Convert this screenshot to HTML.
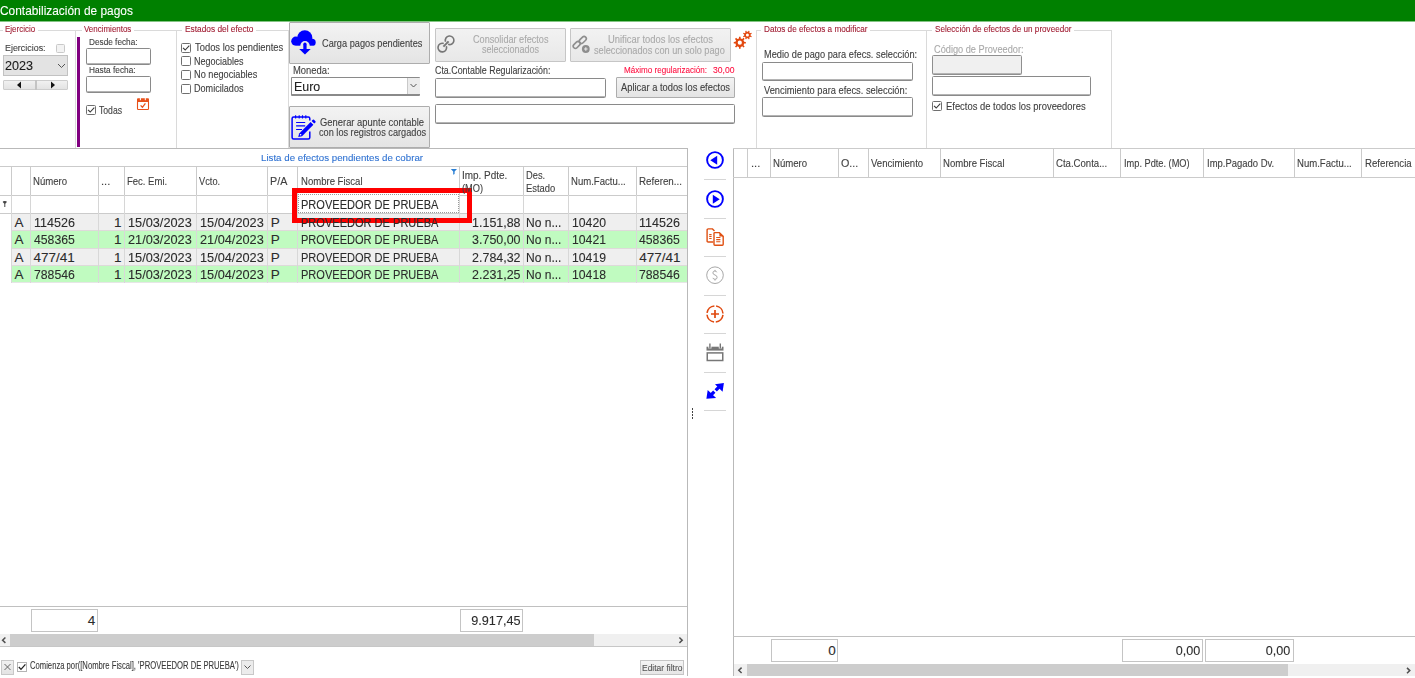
<!DOCTYPE html>
<html><head><meta charset="utf-8"><title>Contabilización de pagos</title>
<style>
html,body{margin:0;padding:0;background:#fff;width:1415px;height:678px;overflow:hidden}
body{position:relative;font-family:"Liberation Sans",sans-serif}
div,svg,span{position:absolute}
span{white-space:pre;-webkit-text-stroke:0.1px currentColor}
</style></head><body>
<div style="left:0px;top:0px;width:1415px;height:21px;background:#008000"></div>
<div style="left:0px;top:21px;width:1415px;height:1px;background:#84c484"></div>
<div style="left:-1px;top:30px;width:76px;height:1px;background:#dadada"></div>
<div style="left:75px;top:30px;width:1px;height:118px;background:#dadada"></div>
<div style="left:2.5px;top:24px;width:35.2px;height:10px;background:#fff"></div>
<div style="left:75px;top:30px;width:101px;height:1px;background:#dadada"></div>
<div style="left:75px;top:30px;width:1px;height:118px;background:#dadada"></div>
<div style="left:176px;top:30px;width:1px;height:118px;background:#dadada"></div>
<div style="left:81.6px;top:24px;width:52.4px;height:10px;background:#fff"></div>
<div style="left:176px;top:30px;width:112px;height:1px;background:#dadada"></div>
<div style="left:176px;top:30px;width:1px;height:118px;background:#dadada"></div>
<div style="left:288px;top:30px;width:1px;height:118px;background:#dadada"></div>
<div style="left:182px;top:24px;width:73.5px;height:10px;background:#fff"></div>
<div style="left:756px;top:30px;width:170px;height:1px;background:#dadada"></div>
<div style="left:756px;top:30px;width:1px;height:118px;background:#dadada"></div>
<div style="left:926px;top:30px;width:1px;height:118px;background:#dadada"></div>
<div style="left:761.4px;top:24px;width:108.6px;height:10px;background:#fff"></div>
<div style="left:926px;top:30px;width:185px;height:1px;background:#dadada"></div>
<div style="left:926px;top:30px;width:1px;height:118px;background:#dadada"></div>
<div style="left:1111px;top:30px;width:1px;height:118px;background:#dadada"></div>
<div style="left:932px;top:24px;width:141.5px;height:10px;background:#fff"></div>
<div style="left:56px;top:44px;width:9px;height:9px;box-sizing:border-box;border:1px solid #c9c9c9;border-radius:1.5px;background:#f3f3f3"></div>
<div style="left:3px;top:55px;width:65px;height:21px;box-sizing:border-box;background:#e3e3e3;border:1px solid #c2c2c2"></div>
<svg style="left:57px;top:63px" width="9" height="6" viewBox="0 0 9 6"><path d="M1 1 L4.5 4.5 L8 1" fill="none" stroke="#555" stroke-width="1"/></svg>
<div style="left:3px;top:80px;width:65px;height:10px;box-sizing:border-box;background:linear-gradient(#f1f1f1,#e3e3e3);border:1px solid #cdcdcd;border-radius:1px"></div>
<div style="left:35px;top:80px;width:1.5px;height:10px;background:#c4c4c4"></div>
<svg style="left:16px;top:81px" width="6" height="8" viewBox="0 0 6 8"><path d="M5 0.5 L1 4 L5 7.5 Z" fill="#111"/></svg>
<svg style="left:50px;top:81px" width="6" height="8" viewBox="0 0 6 8"><path d="M1 0.5 L5 4 L1 7.5 Z" fill="#111"/></svg>
<div style="left:77px;top:37px;width:3px;height:110px;background:#800080"></div>
<div style="left:86px;top:48px;width:65px;height:17px;box-sizing:border-box;background:#fff;border:1px solid #8a8a8a;border-radius:1.5px;box-shadow:inset 0 -1px 0 #b4b4b4"></div>
<div style="left:86px;top:76px;width:65px;height:17px;box-sizing:border-box;background:#fff;border:1px solid #8a8a8a;border-radius:1.5px;box-shadow:inset 0 -1px 0 #b4b4b4"></div>
<div style="left:86px;top:105px;width:10px;height:10px;box-sizing:border-box;border:1px solid #6f6f6f;border-radius:1.5px;background:#fff"></div>
<svg style="left:86px;top:105px" width="10" height="10" viewBox="0 0 10 10"><path d="M2 4.8 L4.2 7 L8.3 2.6" fill="none" stroke="#3a3a3a" stroke-width="1.1"/></svg>
<svg style="left:132px;top:94px" width="22" height="22" viewBox="0 0 22 22"><g fill="#e8501a"><path d="M5 5.2 Q5 4.2 6 4.2 L16 4.2 Q17 4.2 17 5.2 L17 8 L5 8 Z"/></g><rect x="5.5" y="7.5" width="11" height="8" fill="none" stroke="#e8501a" stroke-width="1.1" rx="0.8"/><path d="M8.4 3.4 V6.2 M13.3 3.4 V6.2" stroke="#fff" stroke-width="1"/><path d="M8.6 11.4 L10.4 13.3 L13.4 9.3" fill="none" stroke="#e8501a" stroke-width="1.3"/></svg>
<div style="left:181px;top:43px;width:10px;height:10px;box-sizing:border-box;border:1px solid #6f6f6f;border-radius:1.5px;background:#fff"></div>
<svg style="left:181px;top:43px" width="10" height="10" viewBox="0 0 10 10"><path d="M2 4.8 L4.2 7 L8.3 2.6" fill="none" stroke="#3a3a3a" stroke-width="1.1"/></svg>
<div style="left:181px;top:56px;width:10px;height:10px;box-sizing:border-box;border:1px solid #6f6f6f;border-radius:1.5px;background:#fff"></div>
<div style="left:181px;top:70px;width:10px;height:10px;box-sizing:border-box;border:1px solid #6f6f6f;border-radius:1.5px;background:#fff"></div>
<div style="left:181px;top:84px;width:10px;height:10px;box-sizing:border-box;border:1px solid #6f6f6f;border-radius:1.5px;background:#fff"></div>
<div style="left:289px;top:22px;width:141px;height:42px;box-sizing:border-box;background:linear-gradient(#f3f3f3,#e4e4e4);border:1px solid #adadad;border-radius:1px"></div>
<svg style="left:288px;top:26px" width="32" height="32" viewBox="0 0 32 32"><defs><mask id="m1"><rect width="32" height="19.7" fill="#fff"/><circle cx="17" cy="19.8" r="4.7" fill="#000"/></mask></defs><g fill="#0000ff" mask="url(#m1)"><circle cx="16.8" cy="11.9" r="7.6"/><circle cx="7.9" cy="15.2" r="4.7"/><circle cx="24.1" cy="16.4" r="3.6"/><rect x="7.9" y="13" width="16" height="7"/></g><path d="M15.3 23.2 V18.2 Q15.3 16.5 16.95 16.5 Q18.6 16.5 18.6 18.2 V23.2 Z" fill="#0000ff"/><path d="M11.2 22.9 L22.7 22.9 L16.95 28.6 Z" fill="#0000ff"/></svg>
<div style="left:291px;top:77px;width:129px;height:19px;box-sizing:border-box;background:#fff;border:1px solid #8a8a8a;border-bottom:2px solid #8a8a8a;border-radius:1px"></div>
<div style="left:407px;top:78px;width:12px;height:16px;background:#ececec;border-left:1px solid #c9c9c9"></div>
<svg style="left:409px;top:83px" width="9" height="6" viewBox="0 0 9 6"><path d="M1.5 1 L4.5 4 L7.5 1" fill="none" stroke="#555" stroke-width="1"/></svg>
<div style="left:289px;top:106px;width:141px;height:42px;box-sizing:border-box;background:linear-gradient(#f3f3f3,#e4e4e4);border:1px solid #adadad;border-radius:1px"></div>
<svg style="left:289px;top:112px" width="30" height="30" viewBox="0 0 30 30"><path d="M20.8 8.6 V6.6 Q20.8 5.1 19.3 5.1 H4.6 Q3.1 5.1 3.1 6.6 V25.5 Q3.1 27 4.6 27 H19.3 Q20.8 27 20.8 25.5 V19.6" fill="none" stroke="#0000ff" stroke-width="1.5"/><path d="M6.6 3.2 V6.4 M10.2 3.2 V6.4 M13.5 3.2 V6.4 M16.8 3.2 V6.4" stroke="#0000ff" stroke-width="1.1"/><path d="M7.1 10.5 H16.2 M7.1 13.9 H16.2 M7.1 17.5 H13" stroke="#0000ff" stroke-width="1.2"/><path d="M10.2 21.4 L21.6 10 L24.4 12.8 L13 24.2 L9.2 25 Z" fill="#0000ff"/><path d="M22.6 9 L23.8 7.8 Q24.4 7.2 25 7.8 L26.4 9.2 Q27 9.8 26.4 10.4 L25.2 11.6 Z" fill="#0000ff"/><circle cx="11.6" cy="22.7" r="0.8" fill="#fff"/></svg>
<div style="left:435px;top:28px;width:131px;height:34px;box-sizing:border-box;background:linear-gradient(#f2f2f2,#e8e8e8);border:1px solid #c6c6c6;border-radius:1px"></div>
<svg style="left:434px;top:32px" width="24" height="24" viewBox="0 0 24 24"><g fill="none" stroke="#767676" stroke-width="1.6"><path d="M11.56 9.77 A4.3 4.3 0 1 1 14.13 12.34"/><path d="M12.34 14.13 A4.3 4.3 0 1 1 9.77 11.56"/><path d="M9.4 14.6 L14.6 9.4" stroke-width="2"/></g></svg>
<div style="left:435px;top:78px;width:171px;height:20px;box-sizing:border-box;background:#fff;border:1px solid #8a8a8a;border-radius:1.5px;box-shadow:inset 0 -1px 0 #b4b4b4"></div>
<div style="left:570px;top:28px;width:161px;height:34px;box-sizing:border-box;background:linear-gradient(#f2f2f2,#e8e8e8);border:1px solid #c6c6c6;border-radius:1px"></div>
<svg style="left:569px;top:32px" width="24" height="24" viewBox="0 0 24 24"><g fill="none" stroke="#8e8e8e" stroke-width="1.6"><rect x="9.8" y="5.75" width="8" height="4.4" rx="2.2" transform="rotate(-45 13.8 7.95)"/><rect x="3.7" y="10.7" width="8" height="4.4" rx="2.2" transform="rotate(-45 7.7 12.9)"/></g><circle cx="16.8" cy="17" r="3.9" fill="#8e8e8e"/><path d="M15.0 17 H18.6 M16.8 15.2 V18.8" stroke="#e6e6e6" stroke-width="1.2"/></svg>
<svg style="left:730px;top:26px" width="26" height="26" viewBox="0 0 26 26"><path d="M8.12,12.63 L8.94,12.38 L8.99,10.65 L10.61,10.65 L10.66,12.38 L11.48,12.63 L12.24,13.04 L13.50,11.85 L14.65,13.00 L13.46,14.26 L13.87,15.02 L14.12,15.84 L15.85,15.89 L15.85,17.51 L14.12,17.56 L13.87,18.38 L13.46,19.14 L14.65,20.40 L13.50,21.55 L12.24,20.36 L11.48,20.77 L10.66,21.02 L10.61,22.75 L8.99,22.75 L8.94,21.02 L8.12,20.77 L7.36,20.36 L6.10,21.55 L4.95,20.40 L6.14,19.14 L5.73,18.38 L5.48,17.56 L3.75,17.51 L3.75,15.89 L5.48,15.84 L5.73,15.02 L6.14,14.26 L4.95,13.00 L6.10,11.85 L7.36,13.04 Z M11.9,16.7 A2.1 2.1 0 1 0 7.700000000000001,16.7 A2.1 2.1 0 1 0 11.9,16.7 Z" fill="#e2480f" fill-rule="evenodd"/><path d="M17.40,5.80 L18.02,5.86 L18.55,4.65 L19.66,5.11 L19.18,6.34 L19.66,6.74 L20.06,7.22 L21.29,6.74 L21.75,7.85 L20.54,8.38 L20.60,9.00 L20.54,9.62 L21.75,10.15 L21.29,11.26 L20.06,10.78 L19.66,11.26 L19.18,11.66 L19.66,12.89 L18.55,13.35 L18.02,12.14 L17.40,12.20 L16.78,12.14 L16.25,13.35 L15.14,12.89 L15.62,11.66 L15.14,11.26 L14.74,10.78 L13.51,11.26 L13.05,10.15 L14.26,9.62 L14.20,9.00 L14.26,8.38 L13.05,7.85 L13.51,6.74 L14.74,7.22 L15.14,6.74 L15.62,6.34 L15.14,5.11 L16.25,4.65 L16.78,5.86 Z M18.9,9.0 A1.5 1.5 0 1 0 15.899999999999999,9.0 A1.5 1.5 0 1 0 18.9,9.0 Z" fill="#e2480f" fill-rule="evenodd"/></svg>
<div style="left:616px;top:77px;width:119px;height:21px;box-sizing:border-box;background:linear-gradient(#f3f3f3,#e4e4e4);border:1px solid #adadad;border-radius:1px"></div>
<div style="left:435px;top:104px;width:300px;height:20px;box-sizing:border-box;background:#fff;border:1px solid #8a8a8a;border-radius:1.5px;box-shadow:inset 0 -1px 0 #b4b4b4"></div>
<div style="left:762px;top:62px;width:151px;height:19px;box-sizing:border-box;background:#fff;border:1px solid #8a8a8a;border-radius:1.5px;box-shadow:inset 0 -1px 0 #b4b4b4"></div>
<div style="left:762px;top:97px;width:151px;height:20px;box-sizing:border-box;background:#fff;border:1px solid #8a8a8a;border-radius:1.5px;box-shadow:inset 0 -1px 0 #b4b4b4"></div>
<div style="left:932px;top:55px;width:90px;height:20px;box-sizing:border-box;background:#f0f0f0;border:1px solid #8f8f8f;border-radius:1.5px;box-shadow:inset 0 -1px 0 #b4b4b4"></div>
<div style="left:932px;top:76px;width:159px;height:20px;box-sizing:border-box;background:#fff;border:1px solid #8a8a8a;border-radius:1.5px;box-shadow:inset 0 -1px 0 #b4b4b4"></div>
<div style="left:932px;top:101px;width:10px;height:10px;box-sizing:border-box;border:1px solid #6f6f6f;border-radius:1.5px;background:#fff"></div>
<svg style="left:932px;top:101px" width="10" height="10" viewBox="0 0 10 10"><path d="M2 4.8 L4.2 7 L8.3 2.6" fill="none" stroke="#3a3a3a" stroke-width="1.1"/></svg>
<div style="left:0px;top:148px;width:688px;height:1px;background:#b9b9b9"></div>
<div style="left:687px;top:148px;width:1px;height:528px;background:#b9b9b9"></div>
<div style="left:0px;top:166px;width:687px;height:1px;background:#cbcbcb"></div>
<div style="left:0px;top:195px;width:687px;height:1px;background:#cbcbcb"></div>
<div style="left:0px;top:213px;width:687px;height:1px;background:#cbcbcb"></div>
<div style="left:12px;top:214px;width:675px;height:16px;background:#efefef"></div>
<div style="left:12px;top:231px;width:675px;height:17px;background:#c0fbc0"></div>
<div style="left:12px;top:249px;width:675px;height:16px;background:#efefef"></div>
<div style="left:12px;top:266px;width:675px;height:16px;background:#c0fbc0"></div>
<div style="left:12px;top:230px;width:675px;height:1px;background:#dedada"></div>
<div style="left:12px;top:248px;width:675px;height:1px;background:#dedada"></div>
<div style="left:12px;top:265px;width:675px;height:1px;background:#dedada"></div>
<div style="left:12px;top:282px;width:675px;height:1px;background:#e6e6e6"></div>
<div style="left:11px;top:166px;width:1px;height:29px;background:#cbcbcb"></div>
<div style="left:11px;top:195px;width:1px;height:18px;background:#d6d6d6"></div>
<div style="left:11px;top:213px;width:1px;height:70px;background:#d8d8d8"></div>
<div style="left:30px;top:166px;width:1px;height:29px;background:#cbcbcb"></div>
<div style="left:30px;top:195px;width:1px;height:18px;background:#d6d6d6"></div>
<div style="left:30px;top:213px;width:1px;height:70px;background:#d8d8d8"></div>
<div style="left:98px;top:166px;width:1px;height:29px;background:#cbcbcb"></div>
<div style="left:98px;top:195px;width:1px;height:18px;background:#d6d6d6"></div>
<div style="left:98px;top:213px;width:1px;height:70px;background:#d8d8d8"></div>
<div style="left:124px;top:166px;width:1px;height:29px;background:#cbcbcb"></div>
<div style="left:124px;top:195px;width:1px;height:18px;background:#d6d6d6"></div>
<div style="left:124px;top:213px;width:1px;height:70px;background:#d8d8d8"></div>
<div style="left:196px;top:166px;width:1px;height:29px;background:#cbcbcb"></div>
<div style="left:196px;top:195px;width:1px;height:18px;background:#d6d6d6"></div>
<div style="left:196px;top:213px;width:1px;height:70px;background:#d8d8d8"></div>
<div style="left:267px;top:166px;width:1px;height:29px;background:#cbcbcb"></div>
<div style="left:267px;top:195px;width:1px;height:18px;background:#d6d6d6"></div>
<div style="left:267px;top:213px;width:1px;height:70px;background:#d8d8d8"></div>
<div style="left:297px;top:166px;width:1px;height:29px;background:#cbcbcb"></div>
<div style="left:297px;top:195px;width:1px;height:18px;background:#d6d6d6"></div>
<div style="left:297px;top:213px;width:1px;height:70px;background:#d8d8d8"></div>
<div style="left:459px;top:166px;width:1px;height:29px;background:#cbcbcb"></div>
<div style="left:459px;top:195px;width:1px;height:18px;background:#d6d6d6"></div>
<div style="left:459px;top:213px;width:1px;height:70px;background:#d8d8d8"></div>
<div style="left:523px;top:166px;width:1px;height:29px;background:#cbcbcb"></div>
<div style="left:523px;top:195px;width:1px;height:18px;background:#d6d6d6"></div>
<div style="left:523px;top:213px;width:1px;height:70px;background:#d8d8d8"></div>
<div style="left:568px;top:166px;width:1px;height:29px;background:#cbcbcb"></div>
<div style="left:568px;top:195px;width:1px;height:18px;background:#d6d6d6"></div>
<div style="left:568px;top:213px;width:1px;height:70px;background:#d8d8d8"></div>
<div style="left:636px;top:166px;width:1px;height:29px;background:#cbcbcb"></div>
<div style="left:636px;top:195px;width:1px;height:18px;background:#d6d6d6"></div>
<div style="left:636px;top:213px;width:1px;height:70px;background:#d8d8d8"></div>
<svg style="left:450px;top:168px" width="8" height="8" viewBox="0 0 8 8"><path d="M0.8 1 H7 L4.6 3.6 V6 L3.2 6.8 V3.6 Z" fill="#2a7fd4"/></svg>
<svg style="left:0px;top:199px" width="10" height="10" viewBox="0 0 10 10"><path d="M2.7 3 Q2.7 2 4.8 2 Q6.9 2 6.9 3 L5.3 4.8 V8 H4.3 V4.8 Z" fill="#444"/></svg>
<div style="left:298px;top:194px;width:161px;height:19px;box-sizing:border-box;border:1px dotted #9a9a9a;background:#fff"></div>
<div style="left:292px;top:188px;width:180px;height:35px;box-sizing:border-box;border:5px solid #ff0000"></div>
<div style="left:0px;top:606px;width:687px;height:1px;background:#c0c0c0"></div>
<div style="left:31px;top:609px;width:67px;height:23px;box-sizing:border-box;border:1px solid #c4c4c4;background:#fff"></div>
<div style="left:460px;top:609px;width:63px;height:23px;box-sizing:border-box;border:1px solid #c4c4c4;background:#fff"></div>
<div style="left:0px;top:634px;width:687px;height:12px;background:#f0f0f0"></div>
<div style="left:10px;top:634px;width:584px;height:12px;background:#cdcdcd"></div>
<div style="left:0px;top:646px;width:687px;height:1px;background:#c7c7c7"></div>
<svg style="left:1px;top:636px" width="7" height="9" viewBox="0 0 7 9"><path d="M4.4 1.5 L1.6 4.2 L4.4 6.9" fill="none" stroke="#505050" stroke-width="1.5"/></svg>
<svg style="left:677px;top:636px" width="7" height="9" viewBox="0 0 7 9"><path d="M2.4 1.5 L5.2 4.2 L2.4 6.9" fill="none" stroke="#505050" stroke-width="1.5"/></svg>
<div style="left:1px;top:660px;width:13px;height:15px;box-sizing:border-box;background:linear-gradient(#f0f0f0,#e4e4e4);border:1px solid #c8c8c8"></div>
<svg style="left:1px;top:660px" width="13" height="14" viewBox="0 0 13 14"><path d="M3.5 4 L9.5 10 M9.5 4 L3.5 10" stroke="#666" stroke-width="1"/></svg>
<div style="left:17px;top:662px;width:10px;height:10px;box-sizing:border-box;border:1px solid #b4b4b4;background:#fff"></div>
<svg style="left:17px;top:662px" width="10" height="10" viewBox="0 0 10 10"><path d="M1.8 5 L4 7.4 L8.4 2.4" fill="none" stroke="#222" stroke-width="1.3"/></svg>
<div style="left:241px;top:660px;width:13px;height:15px;box-sizing:border-box;background:#ececec;border:1px solid #c8c8c8"></div>
<svg style="left:242px;top:664px" width="11" height="7" viewBox="0 0 11 7"><path d="M2.5 1.5 L5.5 4.5 L8.5 1.5" fill="none" stroke="#555" stroke-width="1"/></svg>
<div style="left:640px;top:660px;width:44px;height:15px;box-sizing:border-box;background:linear-gradient(#f4f4f4,#e6e6e6);border:1px solid #c5c5c5"></div>
<div style="left:704px;top:179px;width:22px;height:1px;background:#d6d6d6"></div>
<div style="left:704px;top:218px;width:22px;height:1px;background:#d6d6d6"></div>
<div style="left:704px;top:256px;width:22px;height:1px;background:#d6d6d6"></div>
<div style="left:704px;top:295px;width:22px;height:1px;background:#d6d6d6"></div>
<div style="left:704px;top:333px;width:22px;height:1px;background:#d6d6d6"></div>
<div style="left:704px;top:372px;width:22px;height:1px;background:#d6d6d6"></div>
<div style="left:704px;top:410px;width:22px;height:1px;background:#d6d6d6"></div>
<svg style="left:703px;top:148px" width="24" height="24" viewBox="0 0 24 24"><circle cx="12" cy="12" r="7.9" fill="none" stroke="#0000ff" stroke-width="1.9"/><path d="M7.3 12.2 L14.2 7.7 L14.2 16.8 Z" fill="#0000ff"/></svg>
<svg style="left:703px;top:187px" width="24" height="24" viewBox="0 0 24 24"><circle cx="12" cy="12" r="7.9" fill="none" stroke="#0000ff" stroke-width="1.9"/><path d="M16.7 12.2 L9.8 7.7 L9.8 16.8 Z" fill="#0000ff"/></svg>
<svg style="left:703px;top:225px" width="24" height="24" viewBox="0 0 24 24"><g fill="none" stroke="#e05012" stroke-width="1.4"><path d="M10.3 17 H5.2 Q4.1 17 4.1 15.9 V5 Q4.1 3.9 5.2 3.9 H9.5 L11.5 5.9"/><path d="M11 8.3 Q11 7.6 11.8 7.6 H16.4 L20.2 11.4 V19.3 Q20.2 20.2 19.3 20.2 H11.9 Q11 20.2 11 19.3 Z"/><path d="M6.2 9.6 H8.6 M6.2 11.5 H8.6 M6.2 13.5 H8.6 M13.2 12.5 H17.4 M13.2 14.6 H17.4 M13.2 16.7 H17.4" stroke-width="1.1"/></g><path d="M16.4 7.6 L20.2 11.4 H16.4 Z" fill="#e05012"/></svg>
<svg style="left:703px;top:263px" width="24" height="24" viewBox="0 0 24 24"><circle cx="12" cy="12.2" r="8.3" fill="none" stroke="#a8a8a8" stroke-width="1"/><path d="M13.8 9.3 Q13.4 8 11.9 8 Q9.9 8 9.9 9.9 Q9.9 11.4 12 12 Q14.1 12.6 14.1 14.4 Q14.1 16.3 12 16.3 Q10.3 16.3 9.9 14.9 M12 6.9 V8 M12 16.3 V17.6" fill="none" stroke="#a8a8a8" stroke-width="1"/></svg>
<svg style="left:703px;top:302px" width="24" height="24" viewBox="0 0 24 24"><circle cx="12" cy="12" r="8" fill="none" stroke="#e04a10" stroke-width="1.6" stroke-dasharray="10.77 1.8" stroke-dashoffset="-0.9"/><path d="M8 12 H16 M12 8 V16" stroke="#e04a10" stroke-width="1.7"/></svg>
<svg style="left:703px;top:340px" width="24" height="24" viewBox="0 0 24 24"><path d="M3.5 6.7 H20.5 V10.6 H3.5 Z" fill="#777"/><path d="M6.9 3.5 V8.5 M17.3 3.5 V8.5" stroke="#fff" stroke-width="3"/><path d="M6.9 3.5 V8.5 M17.3 3.5 V8.5" stroke="#777" stroke-width="1.4"/><rect x="4.25" y="12.9" width="15.5" height="7.6" fill="none" stroke="#777" stroke-width="1.5"/></svg>
<svg style="left:703px;top:379px" width="24" height="24" viewBox="0 0 24 24"><path d="M12.0 5.2 L20.9 3.9 L19.6 12.8 Z M3.4 19.8 L4.7 10.9 L13.1 19.0 Z" fill="#0000ff"/><path d="M12.7 11.3 L17.4 6.6 M11.3 12.7 L6.6 17.4" stroke="#0000ff" stroke-width="3.3"/></svg>
<div style="left:691.5px;top:408px;width:1.5px;height:1.5px;background:#444"></div>
<div style="left:691.5px;top:411px;width:1.5px;height:1.5px;background:#444"></div>
<div style="left:691.5px;top:414px;width:1.5px;height:1.5px;background:#444"></div>
<div style="left:691.5px;top:417px;width:1.5px;height:1.5px;background:#444"></div>
<div style="left:733px;top:148px;width:1px;height:528px;background:#b9b9b9"></div>
<div style="left:733px;top:148px;width:682px;height:1px;background:#cbcbcb"></div>
<div style="left:733px;top:177px;width:682px;height:1px;background:#cbcbcb"></div>
<div style="left:747px;top:148px;width:1px;height:29px;background:#cbcbcb"></div>
<div style="left:770px;top:148px;width:1px;height:29px;background:#cbcbcb"></div>
<div style="left:838px;top:148px;width:1px;height:29px;background:#cbcbcb"></div>
<div style="left:868px;top:148px;width:1px;height:29px;background:#cbcbcb"></div>
<div style="left:940px;top:148px;width:1px;height:29px;background:#cbcbcb"></div>
<div style="left:1053px;top:148px;width:1px;height:29px;background:#cbcbcb"></div>
<div style="left:1120px;top:148px;width:1px;height:29px;background:#cbcbcb"></div>
<div style="left:1203px;top:148px;width:1px;height:29px;background:#cbcbcb"></div>
<div style="left:1294px;top:148px;width:1px;height:29px;background:#cbcbcb"></div>
<div style="left:1361px;top:148px;width:1px;height:29px;background:#cbcbcb"></div>
<div style="left:733px;top:636px;width:682px;height:1px;background:#c0c0c0"></div>
<div style="left:771px;top:639px;width:67px;height:23px;box-sizing:border-box;border:1px solid #c4c4c4;background:#fff"></div>
<div style="left:1122px;top:639px;width:81px;height:23px;box-sizing:border-box;border:1px solid #c4c4c4;background:#fff"></div>
<div style="left:1205px;top:639px;width:89px;height:23px;box-sizing:border-box;border:1px solid #c4c4c4;background:#fff"></div>
<div style="left:734px;top:664px;width:681px;height:12px;background:#f0f0f0"></div>
<div style="left:747px;top:664px;width:541px;height:12px;background:#cdcdcd"></div>
<svg style="left:736px;top:666px" width="7" height="9" viewBox="0 0 7 9"><path d="M5.6 1.6 L2.8 4.3 L5.6 7" fill="none" stroke="#505050" stroke-width="1.5"/></svg>
<svg style="left:1405px;top:666px" width="7" height="9" viewBox="0 0 7 9"><path d="M2 1.9 L4.8 4.6 L2 7.3" fill="none" stroke="#505050" stroke-width="1.5"/></svg>
<span style="top:4.07px;font-size:13.5px;line-height:13.5px;color:#ffffff;left:-0.21px;transform:scaleX(0.8811);transform-origin:0 0;">Contabilización de pagos</span>
<span style="top:25.28px;font-size:9px;line-height:9px;color:#a01c32;left:5.02px;transform:scaleX(0.8866);transform-origin:0 0;">Ejercicio</span>
<span style="top:25.28px;font-size:9px;line-height:9px;color:#a01c32;left:84.12px;transform:scaleX(0.8846);transform-origin:0 0;">Vencimientos</span>
<span style="top:25.28px;font-size:9px;line-height:9px;color:#a01c32;left:184.50px;transform:scaleX(0.9249);transform-origin:0 0;">Estados del efecto</span>
<span style="top:25.28px;font-size:9px;line-height:9px;color:#a01c32;left:763.91px;transform:scaleX(0.9081);transform-origin:0 0;">Datos de efectos a modificar</span>
<span style="top:25.28px;font-size:9px;line-height:9px;color:#a01c32;left:934.51px;transform:scaleX(0.9032);transform-origin:0 0;">Selección de efectos de un proveedor</span>
<span style="top:42.84px;font-size:9.75px;line-height:9.75px;color:#404040;left:5.37px;transform:scaleX(0.9129);transform-origin:0 0;">Ejercicios:</span>
<span style="top:59.27px;font-size:13.5px;line-height:13.5px;color:#1a1a1a;left:5.14px;transform:scaleX(0.9322);transform-origin:0 0;">2023</span>
<span style="top:38.48px;font-size:9px;line-height:9px;color:#404040;left:88.51px;transform:scaleX(0.9160);transform-origin:0 0;">Desde fecha:</span>
<span style="top:66.48px;font-size:9px;line-height:9px;color:#404040;left:88.50px;transform:scaleX(0.9221);transform-origin:0 0;">Hasta fecha:</span>
<span style="top:105.83px;font-size:10px;line-height:10px;color:#404040;left:99.48px;transform:scaleX(0.8632);transform-origin:0 0;">Todas</span>
<span style="top:42.83px;font-size:10px;line-height:10px;color:#404040;left:194.94px;transform:scaleX(0.9389);transform-origin:0 0;">Todos los pendientes</span>
<span style="top:56.53px;font-size:10px;line-height:10px;color:#404040;left:194.46px;transform:scaleX(0.8988);transform-origin:0 0;">Negociables</span>
<span style="top:70.23px;font-size:10px;line-height:10px;color:#404040;left:194.45px;transform:scaleX(0.9183);transform-origin:0 0;">No negociables</span>
<span style="top:83.93px;font-size:10px;line-height:10px;color:#404040;left:194.45px;transform:scaleX(0.9086);transform-origin:0 0;">Domicilados</span>
<span style="top:38.83px;font-size:10px;line-height:10px;color:#404040;left:322.45px;transform:scaleX(0.9213);transform-origin:0 0;">Carga pagos pendientes</span>
<span style="top:66.03px;font-size:10px;line-height:10px;color:#404040;left:293.14px;transform:scaleX(0.9411);transform-origin:0 0;">Moneda:</span>
<span style="top:79.89px;font-size:13px;line-height:13px;color:#222;left:293.65px;transform:scaleX(0.9572);transform-origin:0 0;">Euro</span>
<span style="top:117.53px;font-size:10px;line-height:10px;color:#404040;left:320.44px;transform:scaleX(0.9402);transform-origin:0 0;">Generar apunte contable</span>
<span style="top:128.13px;font-size:10px;line-height:10px;color:#404040;left:319.45px;transform:scaleX(0.9175);transform-origin:0 0;">con los registros cargados</span>
<span style="top:34.83px;font-size:10px;line-height:10px;color:#a9a9a9;left:472.85px;transform:scaleX(0.9115);transform-origin:0 0;">Consolidar efectos</span>
<span style="top:45.43px;font-size:10px;line-height:10px;color:#a9a9a9;left:481.76px;transform:scaleX(0.9007);transform-origin:0 0;">seleccionados</span>
<span style="top:66.13px;font-size:10px;line-height:10px;color:#404040;left:435.17px;transform:scaleX(0.8869);transform-origin:0 0;">Cta.Contable Regularización:</span>
<span style="top:35.33px;font-size:10px;line-height:10px;color:#a9a9a9;left:608.14px;transform:scaleX(0.9392);transform-origin:0 0;">Unificar todos los efectos</span>
<span style="top:45.83px;font-size:10px;line-height:10px;color:#a9a9a9;left:594.35px;transform:scaleX(0.9190);transform-origin:0 0;">seleccionados con un solo pago</span>
<span style="top:65.16px;font-size:9.5px;line-height:9.5px;color:#ff1040;left:623.52px;transform:scaleX(0.8493);transform-origin:0 0;">Máximo regularización:</span>
<span style="top:65.16px;font-size:9.5px;line-height:9.5px;color:#ff1040;left:713.48px;transform:scaleX(0.9054);transform-origin:0 0;">30,00</span>
<span style="top:83.23px;font-size:10px;line-height:10px;color:#404040;left:621.04px;transform:scaleX(0.9339);transform-origin:0 0;">Aplicar a todos los efectos</span>
<span style="top:50.13px;font-size:10px;line-height:10px;color:#404040;left:764.45px;transform:scaleX(0.9242);transform-origin:0 0;">Medio de pago para efecs. selección:</span>
<span style="top:85.63px;font-size:10px;line-height:10px;color:#404040;left:764.44px;transform:scaleX(0.9307);transform-origin:0 0;">Vencimiento para efecs. selección:</span>
<span style="top:45.43px;font-size:10px;line-height:10px;color:#a9a9a9;left:934.45px;transform:scaleX(0.9209);transform-origin:0 0;">Código de Proveedor:</span>
<span style="top:101.83px;font-size:10px;line-height:10px;color:#404040;left:945.94px;transform:scaleX(0.9407);transform-origin:0 0;">Efectos de todos los proveedores</span>
<span style="top:153.46px;font-size:9.5px;line-height:9.5px;color:#2f72d2;left:260.82px;transform:scaleX(1.0228);transform-origin:0 0;">Lista de efectos pendientes de cobrar</span>
<span style="top:177.03px;font-size:10px;line-height:10px;color:#404040;left:33.32px;transform:scaleX(0.9599);transform-origin:0 0;">Número</span>
<span style="top:177.03px;font-size:10px;line-height:10px;color:#404040;left:100.83px;transform:scaleX(1.1199);transform-origin:0 0;">...</span>
<span style="top:177.03px;font-size:10px;line-height:10px;color:#404040;left:127.43px;transform:scaleX(0.9504);transform-origin:0 0;">Fec. Emi.</span>
<span style="top:177.03px;font-size:10px;line-height:10px;color:#404040;left:199.34px;transform:scaleX(0.9261);transform-origin:0 0;">Vcto.</span>
<span style="top:177.03px;font-size:10px;line-height:10px;color:#404040;left:270.36px;transform:scaleX(1.0720);transform-origin:0 0;">P/A</span>
<span style="top:177.03px;font-size:10px;line-height:10px;color:#404040;left:301.33px;transform:scaleX(0.9547);transform-origin:0 0;">Nombre Fiscal</span>
<span style="top:171.33px;font-size:10px;line-height:10px;color:#404040;left:462.10px;transform:scaleX(0.9937);transform-origin:0 0;">Imp. Pdte.</span>
<span style="top:183.83px;font-size:10px;line-height:10px;color:#404040;left:462.14px;transform:scaleX(0.9267);transform-origin:0 0;">(MO)</span>
<span style="top:171.33px;font-size:10px;line-height:10px;color:#404040;left:526.34px;transform:scaleX(0.9296);transform-origin:0 0;">Des.</span>
<span style="top:183.83px;font-size:10px;line-height:10px;color:#404040;left:526.34px;transform:scaleX(0.9385);transform-origin:0 0;">Estado</span>
<span style="top:177.03px;font-size:10px;line-height:10px;color:#404040;left:571.43px;transform:scaleX(0.9563);transform-origin:0 0;">Num.Factu...</span>
<span style="top:177.03px;font-size:10px;line-height:10px;color:#404040;left:639.41px;transform:scaleX(0.9784);transform-origin:0 0;">Referen...</span>
<span style="top:215.67px;font-size:13.5px;line-height:13.5px;color:#2b2b2b;left:14.49px;">A</span>
<span style="top:215.67px;font-size:13.5px;line-height:13.5px;color:#2b2b2b;left:33.55px;transform:scaleX(0.9287);transform-origin:0 0;">114526</span>
<span style="top:215.67px;font-size:13.5px;line-height:13.5px;color:#2b2b2b;right:1293.39px;">1</span>
<span style="top:215.67px;font-size:13.5px;line-height:13.5px;color:#2b2b2b;left:128.24px;transform:scaleX(0.9430);transform-origin:0 0;">15/03/2023</span>
<span style="top:215.67px;font-size:13.5px;line-height:13.5px;color:#2b2b2b;left:199.74px;transform:scaleX(0.9430);transform-origin:0 0;">15/04/2023</span>
<span style="top:215.67px;font-size:13.5px;line-height:13.5px;color:#2b2b2b;left:270.69px;">P</span>
<span style="top:215.67px;font-size:13.5px;line-height:13.5px;color:#2b2b2b;left:300.64px;transform:scaleX(0.8178);transform-origin:0 0;">PROVEEDOR DE PRUEBA</span>
<span style="top:215.67px;font-size:13.5px;line-height:13.5px;color:#2b2b2b;right:894.05px;transform:scaleX(0.9226);transform-origin:100% 0;">1.151,88</span>
<span style="top:215.67px;font-size:13.5px;line-height:13.5px;color:#2b2b2b;left:526.28px;transform:scaleX(0.8910);transform-origin:0 0;">No n...</span>
<span style="top:215.67px;font-size:13.5px;line-height:13.5px;color:#2b2b2b;left:571.57px;transform:scaleX(0.9046);transform-origin:0 0;">10420</span>
<span style="top:215.67px;font-size:13.5px;line-height:13.5px;color:#2b2b2b;left:639.25px;transform:scaleX(0.9287);transform-origin:0 0;">114526</span>
<span style="top:233.12px;font-size:13.5px;line-height:13.5px;color:#2b2b2b;left:14.49px;">A</span>
<span style="top:233.12px;font-size:13.5px;line-height:13.5px;color:#2b2b2b;left:33.57px;transform:scaleX(0.9069);transform-origin:0 0;">458365</span>
<span style="top:233.12px;font-size:13.5px;line-height:13.5px;color:#2b2b2b;right:1293.39px;">1</span>
<span style="top:233.12px;font-size:13.5px;line-height:13.5px;color:#2b2b2b;left:128.24px;transform:scaleX(0.9430);transform-origin:0 0;">21/03/2023</span>
<span style="top:233.12px;font-size:13.5px;line-height:13.5px;color:#2b2b2b;left:199.74px;transform:scaleX(0.9430);transform-origin:0 0;">21/04/2023</span>
<span style="top:233.12px;font-size:13.5px;line-height:13.5px;color:#2b2b2b;left:270.69px;">P</span>
<span style="top:233.12px;font-size:13.5px;line-height:13.5px;color:#2b2b2b;left:300.64px;transform:scaleX(0.8178);transform-origin:0 0;">PROVEEDOR DE PRUEBA</span>
<span style="top:233.12px;font-size:13.5px;line-height:13.5px;color:#2b2b2b;right:894.05px;transform:scaleX(0.9226);transform-origin:100% 0;">3.750,00</span>
<span style="top:233.12px;font-size:13.5px;line-height:13.5px;color:#2b2b2b;left:526.28px;transform:scaleX(0.8910);transform-origin:0 0;">No n...</span>
<span style="top:233.12px;font-size:13.5px;line-height:13.5px;color:#2b2b2b;left:571.57px;transform:scaleX(0.9046);transform-origin:0 0;">10421</span>
<span style="top:233.12px;font-size:13.5px;line-height:13.5px;color:#2b2b2b;left:639.27px;transform:scaleX(0.9069);transform-origin:0 0;">458365</span>
<span style="top:250.57px;font-size:13.5px;line-height:13.5px;color:#2b2b2b;left:14.49px;">A</span>
<span style="top:250.57px;font-size:13.5px;line-height:13.5px;color:#2b2b2b;left:33.49px;">477/41</span>
<span style="top:250.57px;font-size:13.5px;line-height:13.5px;color:#2b2b2b;right:1293.39px;">1</span>
<span style="top:250.57px;font-size:13.5px;line-height:13.5px;color:#2b2b2b;left:128.24px;transform:scaleX(0.9430);transform-origin:0 0;">15/03/2023</span>
<span style="top:250.57px;font-size:13.5px;line-height:13.5px;color:#2b2b2b;left:199.74px;transform:scaleX(0.9430);transform-origin:0 0;">15/04/2023</span>
<span style="top:250.57px;font-size:13.5px;line-height:13.5px;color:#2b2b2b;left:270.69px;">P</span>
<span style="top:250.57px;font-size:13.5px;line-height:13.5px;color:#2b2b2b;left:300.64px;transform:scaleX(0.8178);transform-origin:0 0;">PROVEEDOR DE PRUEBA</span>
<span style="top:250.57px;font-size:13.5px;line-height:13.5px;color:#2b2b2b;right:894.05px;transform:scaleX(0.9226);transform-origin:100% 0;">2.784,32</span>
<span style="top:250.57px;font-size:13.5px;line-height:13.5px;color:#2b2b2b;left:526.28px;transform:scaleX(0.8910);transform-origin:0 0;">No n...</span>
<span style="top:250.57px;font-size:13.5px;line-height:13.5px;color:#2b2b2b;left:571.57px;transform:scaleX(0.9046);transform-origin:0 0;">10419</span>
<span style="top:250.57px;font-size:13.5px;line-height:13.5px;color:#2b2b2b;left:639.19px;">477/41</span>
<span style="top:268.02px;font-size:13.5px;line-height:13.5px;color:#2b2b2b;left:14.49px;">A</span>
<span style="top:268.02px;font-size:13.5px;line-height:13.5px;color:#2b2b2b;left:33.57px;transform:scaleX(0.9069);transform-origin:0 0;">788546</span>
<span style="top:268.02px;font-size:13.5px;line-height:13.5px;color:#2b2b2b;right:1293.39px;">1</span>
<span style="top:268.02px;font-size:13.5px;line-height:13.5px;color:#2b2b2b;left:128.24px;transform:scaleX(0.9430);transform-origin:0 0;">15/03/2023</span>
<span style="top:268.02px;font-size:13.5px;line-height:13.5px;color:#2b2b2b;left:199.74px;transform:scaleX(0.9430);transform-origin:0 0;">15/04/2023</span>
<span style="top:268.02px;font-size:13.5px;line-height:13.5px;color:#2b2b2b;left:270.69px;">P</span>
<span style="top:268.02px;font-size:13.5px;line-height:13.5px;color:#2b2b2b;left:300.64px;transform:scaleX(0.8178);transform-origin:0 0;">PROVEEDOR DE PRUEBA</span>
<span style="top:268.02px;font-size:13.5px;line-height:13.5px;color:#2b2b2b;right:894.05px;transform:scaleX(0.9226);transform-origin:100% 0;">2.231,25</span>
<span style="top:268.02px;font-size:13.5px;line-height:13.5px;color:#2b2b2b;left:526.28px;transform:scaleX(0.8910);transform-origin:0 0;">No n...</span>
<span style="top:268.02px;font-size:13.5px;line-height:13.5px;color:#2b2b2b;left:571.57px;transform:scaleX(0.9046);transform-origin:0 0;">10418</span>
<span style="top:268.02px;font-size:13.5px;line-height:13.5px;color:#2b2b2b;left:639.27px;transform:scaleX(0.9069);transform-origin:0 0;">788546</span>
<span style="top:197.77px;font-size:13.5px;line-height:13.5px;color:#2b2b2b;left:300.64px;transform:scaleX(0.8178);transform-origin:0 0;">PROVEEDOR DE PRUEBA</span>
<span style="top:613.87px;font-size:13.5px;line-height:13.5px;color:#2b2b2b;right:1319.69px;">4</span>
<span style="top:613.87px;font-size:13.5px;line-height:13.5px;color:#2b2b2b;right:894.74px;transform:scaleX(0.9383);transform-origin:100% 0;">9.917,45</span>
<span style="top:661.43px;font-size:10px;line-height:10px;color:#3a3a3a;left:29.54px;transform:scaleX(0.7659);transform-origin:0 0;">Comienza por([Nombre Fiscal], 'PROVEEDOR DE PRUEBA')</span>
<span style="top:663.26px;font-size:9.5px;line-height:9.5px;color:#555;left:641.99px;transform:scaleX(0.8923);transform-origin:0 0;">Editar filtro</span>
<span style="top:158.93px;font-size:10px;line-height:10px;color:#404040;left:750.73px;transform:scaleX(1.1199);transform-origin:0 0;">...</span>
<span style="top:158.93px;font-size:10px;line-height:10px;color:#404040;left:773.42px;transform:scaleX(0.9599);transform-origin:0 0;">Número</span>
<span style="top:158.93px;font-size:10px;line-height:10px;color:#404040;left:840.96px;transform:scaleX(1.0720);transform-origin:0 0;">O...</span>
<span style="top:158.93px;font-size:10px;line-height:10px;color:#404040;left:871.43px;transform:scaleX(0.9571);transform-origin:0 0;">Vencimiento</span>
<span style="top:158.93px;font-size:10px;line-height:10px;color:#404040;left:942.93px;transform:scaleX(0.9547);transform-origin:0 0;">Nombre Fiscal</span>
<span style="top:158.93px;font-size:10px;line-height:10px;color:#404040;left:1056.22px;transform:scaleX(0.9586);transform-origin:0 0;">Cta.Conta...</span>
<span style="top:158.93px;font-size:10px;line-height:10px;color:#404040;left:1124.05px;transform:scaleX(0.9224);transform-origin:0 0;">Imp. Pdte. (MO)</span>
<span style="top:158.93px;font-size:10px;line-height:10px;color:#404040;left:1207.13px;transform:scaleX(0.9460);transform-origin:0 0;">Imp.Pagado Dv.</span>
<span style="top:158.93px;font-size:10px;line-height:10px;color:#404040;left:1297.23px;transform:scaleX(0.9563);transform-origin:0 0;">Num.Factu...</span>
<span style="top:158.93px;font-size:10px;line-height:10px;color:#404040;left:1365.02px;transform:scaleX(0.9648);transform-origin:0 0;">Referencia</span>
<span style="top:643.87px;font-size:13.5px;line-height:13.5px;color:#2b2b2b;right:579.19px;">0</span>
<span style="top:643.87px;font-size:13.5px;line-height:13.5px;color:#2b2b2b;right:214.24px;transform:scaleX(0.9326);transform-origin:100% 0;">0,00</span>
<span style="top:643.87px;font-size:13.5px;line-height:13.5px;color:#2b2b2b;right:124.24px;transform:scaleX(0.9326);transform-origin:100% 0;">0,00</span>
</body></html>
